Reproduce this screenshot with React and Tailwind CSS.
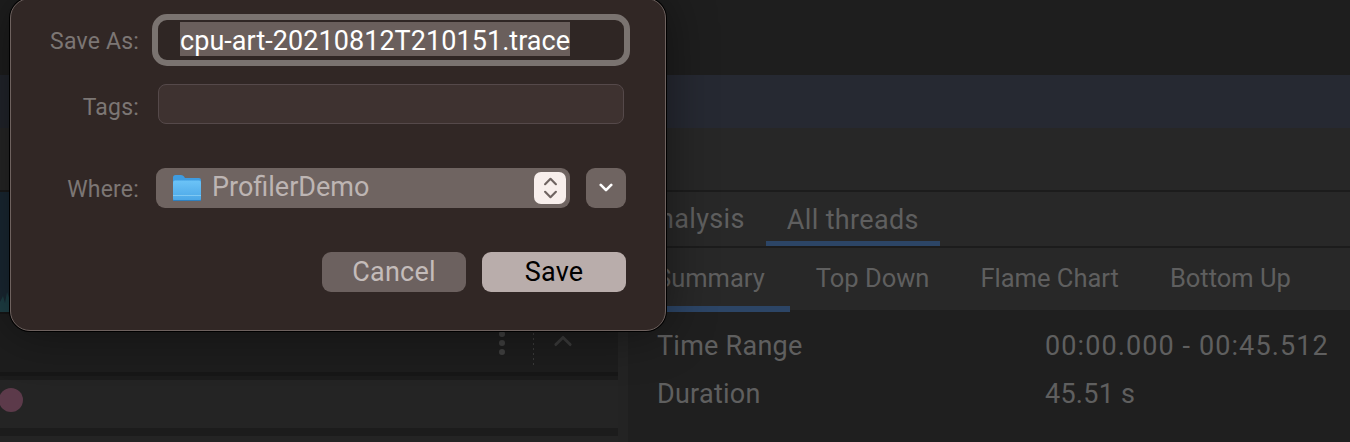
import React from 'react';

const font = { sans: 'font-["Roboto","Liberation_Sans",sans-serif]' };

// Small up/down chevrons used by the popup stepper and the panel collapse arrow
const Chevron = ({ up, className, width = 2.4 }) => (
  <svg viewBox="0 0 16 10" className={className} fill="none" stroke="currentColor" strokeWidth={width} strokeLinecap="round" strokeLinejoin="round">
    <path d={up ? 'M2 8 L8 2 L14 8' : 'M2 2 L8 8 L14 2'} />
  </svg>
);

const FolderIcon = () => (
  <svg viewBox="0 0 30 28" className="w-[30px] h-[28px] shrink-0">
    <defs>
      <linearGradient id="folderBody" x1="0" y1="0" x2="0" y2="1">
        <stop offset="0" stopColor="#6cc3f7" />
        <stop offset="1" stopColor="#4aa6e6" />
      </linearGradient>
    </defs>
    <path d="M1 3.5 Q1 1 3.5 1 H9 Q11 1 12 2.5 L13 4 H27 Q29 4 29 6 V10 H1 Z" fill="#3f9ce0" />
    <path d="M1 8.5 Q1 6.5 3 6.5 H27 Q29 6.5 29 8.5 V25 Q29 27 27 27 H3 Q1 27 1 25 Z" fill="url(#folderBody)" />
    <path d="M1 21.5 H29" stroke="#7fc8f2" strokeWidth="1" />
    <path d="M1 26.5 H29" stroke="#2f7fbd" strokeWidth="1" />
  </svg>
);

const labelClass = 'w-[128px] text-right text-[23px] leading-[30px] tracking-[0.2px] text-[#7c7674]';

function SaveDialog() {
  return (
    <div className={`absolute left-[10px] -top-[2px] w-[656px] h-[333px] rounded-[20px] bg-[#312725] border-[1.5px] border-[#6e625f] shadow-[0_0_0_1px_#000,0_0_50px_rgba(0,0,0,0.45)] ${font.sans}`}>
      <div className="pt-[14.5px] flex items-center">
        <span className={`${labelClass} pt-[5px]`}>Save As:</span>
        <div className="ml-[13px] w-[478px] h-[52px] rounded-[15px] border-[6px] border-[#7a7370] bg-[#2f2624] pl-[22px] flex items-center">
          <span className="mb-[2px] bg-[#6a5f5c] text-white text-[27px] leading-[38px] h-[34px] tracking-[0.05px] whitespace-nowrap">cpu-art-20210812T210151.trace</span>
        </div>
      </div>
      <div className="mt-[18px] flex items-center">
        <span className={`${labelClass} pt-[8px]`}>Tags:</span>
        <div className="ml-[19px] w-[466px] h-[40px] rounded-[8px] bg-[#3e3230] border border-[#55494a]" />
      </div>
      <div className="mt-[44px] flex items-center">
        <span className={`${labelClass} pt-[4px]`}>Where:</span>
        <div className="ml-[17px] w-[414px] h-[40px] rounded-[9px] bg-[#6f6461] flex items-center pl-[16px] pr-[4px]">
          <FolderIcon />
          <span className="ml-[10px] text-[27px] text-[#bdb5b3]">ProfilerDemo</span>
          <div className="ml-auto w-[32px] h-[32px] rounded-[7px] bg-[#f8efec] flex flex-col items-center justify-center gap-[4px] text-[#6f6461]">
            <Chevron up className="w-[15px] h-[9px]" />
            <Chevron className="w-[15px] h-[9px]" />
          </div>
        </div>
        <div className="ml-[16px] w-[40px] h-[40px] rounded-[9px] bg-[#6f6461] flex items-center justify-center text-white">
          <Chevron className="w-[14px] h-[9px]" width={3} />
        </div>
      </div>
      <div className="mt-[44px] flex justify-end gap-[16px] pr-[39px]">
        <button className="w-[144px] h-[40px] pb-[2px] rounded-[9px] bg-[#6c615f] text-[#c4bcba] text-[27px] tracking-[0.2px]">Cancel</button>
        <button className="w-[144px] h-[40px] pb-[2px] rounded-[9px] bg-[#b9adab] text-black text-[27px] tracking-[0.2px]">Save</button>
      </div>
    </div>
  );
}

const Tab = ({ bar, children }) => (
  <div className="relative h-full flex items-center whitespace-nowrap">
    {children}
    {bar && <div className={`absolute bg-[#2c4566] ${bar}`} />}
  </div>
);

function LeftColumn() {
  return (
    <div className="w-[618px] flex flex-col shrink-0">
      <div className="h-[75px] bg-[#1e1e1e]" />
      <div className="h-[53px] bg-[#22252c]" />
      <div className="h-[62px] bg-[#262626]" />
      <div className="h-[2px] bg-[#1a1a1a]" />
      <div className="h-[120px] bg-[#1a2833] flex items-end">
        <svg viewBox="0 0 10 24" className="w-[10px] h-[24px]">
          <path d="M0 24 V14 L3 8 L5 15 L7 4 L10 12 V24 Z" fill="#1e3f45" />
        </svg>
      </div>
      <div className="h-[2px] bg-[#161616]" />
      <div className="h-[58px] bg-[#1d1d1d] flex items-start">
        <div className="ml-[499px] mt-[17px] flex flex-col gap-[3px]">
          <span className="w-[6px] h-[6px] rounded-full bg-[#3f3f3f]" />
          <span className="w-[6px] h-[6px] rounded-full bg-[#3f3f3f]" />
          <span className="w-[6px] h-[6px] rounded-full bg-[#3f3f3f]" />
        </div>
        <div className="ml-[28px] mt-[19px] w-[1px] h-[33px] bg-[repeating-linear-gradient(to_bottom,#3a3a3a_0,#3a3a3a_2px,transparent_2px,transparent_5px)]" />
        <Chevron up className="ml-[19px] mt-[21px] w-[20px] h-[12px] text-[#3a3a3a]" />
      </div>
      <div className="h-[4px] bg-[#171717]" />
      <div className="h-[4px] bg-[#1c1c1c]" />
      <div className="h-[48px] bg-[#242424] flex items-start">
        <span className="-ml-[1px] mt-[8px] w-[24px] h-[24px] rounded-full bg-[#5c3a4a]" />
      </div>
      <div className="h-[8px] bg-[#1c1c1c]" />
      <div className="flex-1 bg-[#242424]" />
    </div>
  );
}

function RightColumn() {
  return (
    <div className={`flex-1 flex flex-col text-[#5f5f5f] ${font.sans}`}>
      <div className="h-[75px] bg-[#1e1e1e]" />
      <div className="h-[53px] bg-[#262932]" />
      <div className="h-[62px] bg-[#272727]" />
      <div className="h-[2px] bg-[#1c1c1c]" />
      <div className="h-[54px] bg-[#282828] flex items-center pl-[13px] gap-[42px] text-[27px] tracking-[0.35px]">
        <Tab>Analysis</Tab>
        <Tab bar="left-[-21px] right-[-21px] bottom-0 h-[5px]"><span className="pt-[2px]">All threads</span></Tab>
      </div>
      <div className="h-[2px] bg-[#1c1c1c]" />
      <div className="h-[62px] bg-[#282828] flex items-center pl-[28px] gap-[51px] text-[25.5px]">
        <Tab bar="left-[-21px] right-[-25px] -bottom-[2px] h-[6px]"><span className="pb-[2px]">Summary</span></Tab>
        <Tab><span className="pb-[2px]">Top Down</span></Tab>
        <Tab><span className="pb-[2px]">Flame Chart</span></Tab>
        <Tab><span className="pb-[2px]">Bottom Up</span></Tab>
      </div>
      <div className="flex-1 bg-[#1f1f1f] pl-[29px] pt-[12px] text-[27px] tracking-[0.25px]">
        <div className="flex h-[48px] items-center">
          <span className="w-[388px]">Time Range</span>
          <span className="tracking-[1.1px]">00:00.000 - 00:45.512</span>
        </div>
        <div className="flex h-[48px] items-center">
          <span className="w-[388px]">Duration</span>
          <span>45.51 s</span>
        </div>
      </div>
    </div>
  );
}

export default function App() {
  return (
    <div className="relative w-[1350px] h-[442px] overflow-hidden flex bg-[#1f1f1f]">
      <LeftColumn />
      <div className="w-[10px] shrink-0 bg-[#232323]" />
      <RightColumn />
      <SaveDialog />
    </div>
  );
}
